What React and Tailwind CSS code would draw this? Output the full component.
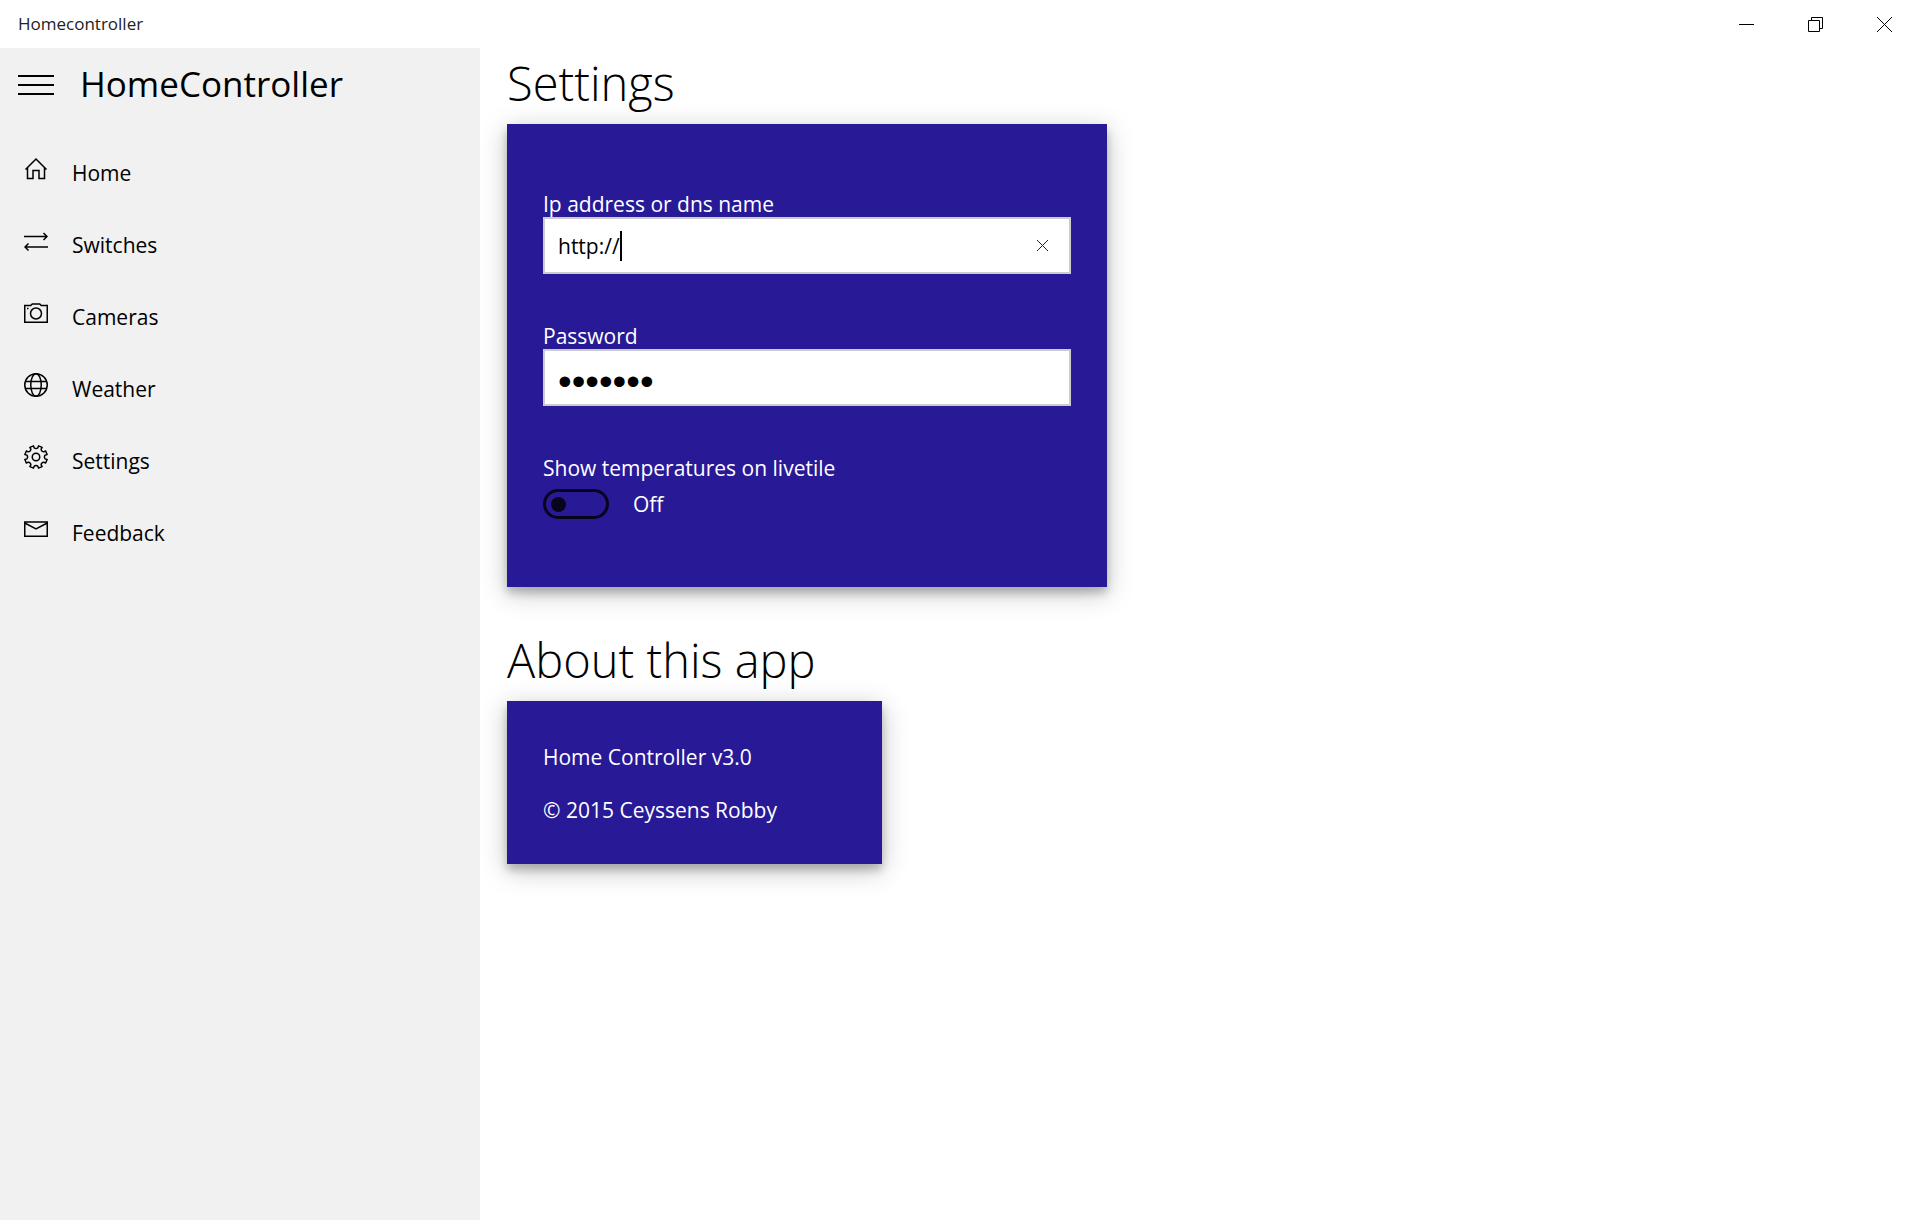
import { useState } from "react";

const stroke = { fill: "none", stroke: "currentColor", strokeWidth: 1.5 };

function gearPath() {
  const pts = [];
  for (let i = 0; i < 8; i++) {
    const base = (i * Math.PI) / 4 + Math.PI / 8;
    [[-0.19, 9.4], [-0.17, 11.4], [0.17, 11.4], [0.19, 9.4]].forEach(([a, r], k) => {
      const p = `${(12 + r * Math.sin(base + a)).toFixed(2)} ${(12 - r * Math.cos(base + a)).toFixed(2)}`;
      if (k === 0 && i > 0) pts.push(`A2.6 2.6 0 0 0 ${p}`);
      else pts.push(`${i === 0 && k === 0 ? "M" : "L"}${p}`);
    });
  }
  const first = pts[0].slice(1);
  return `${pts.join("")}A2.6 2.6 0 0 0 ${first}Z`;
}

const icons = {
  home: (
    <path {...stroke} d="M1.500 12.500 12 2l10.500 10.500M3.500 11v10.500h5.500v-8h6v8h5.500V11" />
  ),
  switches: (
    <path {...stroke} d="M0 7.500h23M19.500 4l3.500 3.500-3.500 3.500M24 18H1M4.500 14.500 1 18l3.500 3.500" />
  ),
  camera: (
    <g {...stroke}>
      <path d="M.75 4.500h6l1.500-1.500h7.500l1.500 1.500h6v16.750H.75z" />
      <circle cx="12" cy="12.500" r="5.500" />
      <path d="M3 7.500h1.500" />
    </g>
  ),
  globe: (
    <g {...stroke}>
      <circle cx="12" cy="12" r="11.250" />
      <ellipse cx="12" cy="12" rx="5.250" ry="11.250" />
      <path d="M1.500 8.500h21M1.500 15.500h21" />
    </g>
  ),
  gear: (
    <g {...stroke} strokeLinejoin="round">
      <path d={gearPath()} />
      <circle cx="12" cy="12" r="3.750" />
    </g>
  ),
  mail: (
    <path {...stroke} d="M.75 5h22.500v14.250H.75zM.75 6l11.250 6 11.250-6" />
  ),
};

const navItems = [
  ["Home", "home"],
  ["Switches", "switches"],
  ["Cameras", "camera"],
  ["Weather", "globe"],
  ["Settings", "gear"],
  ["Feedback", "mail"],
];

function WindowButton({ label, children }) {
  return (
    <button type="button" aria-label={label} className="flex h-12 w-[69px] items-center justify-center">
      <svg width="15" height="15" viewBox="0 0 15 15" fill="none" stroke="black">
        {children}
      </svg>
    </button>
  );
}

function TitleBar() {
  return (
    <header className="flex h-12 items-center justify-between bg-white pr-px pl-[18px]">
      <span className="text-[17px] text-[#222]">Homecontroller</span>
      <div className="flex">
        <WindowButton label="Minimize"><path d="M0 7.500h15" /></WindowButton>
        <WindowButton label="Restore"><path d="M.5 3.500h11v11H.5zM3.500 3.500v-3h11v11h-3" /></WindowButton>
        <WindowButton label="Close"><path d="M0 0l15 15M15 0L0 15" /></WindowButton>
      </div>
    </header>
  );
}

function Sidebar() {
  return (
    <aside className="w-1/4 shrink-0 bg-[#f1f1f1]">
      <div className="flex h-[74px] items-center gap-[26px] pl-[18px]">
        <button type="button" aria-label="Menu" className="flex w-9 flex-col gap-[7px]">
          <span className="h-0.5 bg-black" />
          <span className="h-0.5 bg-black" />
          <span className="h-0.5 bg-black" />
        </button>
        <span className="pb-0.5 text-[35px]">HomeController</span>
      </div>
      <nav className="mt-3.5">
        {navItems.map(([label, icon]) => (
          <a key={label} href={`#${icon}`} className="flex h-[72px] items-center gap-6 pl-6">
            <svg width="24" height="24" viewBox="0 0 24 24" aria-hidden="true" className="mb-1.5">{icons[icon]}</svg>
            <span className="pt-1 text-[21px]">{label}</span>
          </a>
        ))}
      </nav>
    </aside>
  );
}

const cardClass = "bg-[#281997] px-9 text-white shadow-[0_6px_24px_rgba(0,0,0,0.25),0_6px_8px_rgba(0,0,0,0.2)]";
const labelClass = "block text-[21px] leading-[26px]";
const fieldClass = "flex h-[57px] items-center border-2 border-[#ccc] bg-white pl-[13px] text-black";
const headingClass = "h-[76px] text-[47px] leading-[70px] font-light";

function SettingsForm() {
  const [address, setAddress] = useState("http://");
  const [password, setPassword] = useState("1234567");
  const [live, setLive] = useState(false);
  return (
    <form className={`${cardClass} w-[600px] max-w-full pt-[67px] pb-[68px]`}>
      <label htmlFor="address" className={labelClass}>Ip address or dns name</label>
      <div className={fieldClass}>
        <input
          id="address"
          value={address}
          onChange={(e) => setAddress(e.target.value)}
          className="field-sizing-content bg-transparent pt-0.5 text-[21px] outline-none"
        />
        <span className="h-[30px] w-0.5 bg-black" />
        <button type="button" aria-label="Clear" onClick={() => setAddress("")} className="ml-auto flex h-full w-[53px] items-center justify-center">
          <svg width="11" height="11" viewBox="0 0 11 11" stroke="#222"><path d="M0 0l11 11M11 0L0 11" /></svg>
        </button>
      </div>
      <label htmlFor="password" className={`${labelClass} mt-[49px]`}>Password</label>
      <div className={fieldClass}>
        <input
          id="password"
          type="password"
          value={password}
          onChange={(e) => setPassword(e.target.value)}
          className="w-full bg-transparent pt-2 font-['Liberation_Sans',sans-serif] text-[39px] leading-10 outline-none"
        />
      </div>
      <label htmlFor="livetile" className={`${labelClass} mt-[49px]`}>Show temperatures on livetile</label>
      <div className="mt-2 flex h-[30px] items-center gap-6">
        <input
          id="livetile"
          type="checkbox"
          role="switch"
          checked={live}
          onChange={(e) => setLive(e.target.checked)}
          className="h-[30px] w-[66px] appearance-none rounded-full border-3 border-[#07041c] p-[5px] before:block before:size-[15px] before:rounded-full before:bg-[#07041c] checked:before:ml-auto"
        />
        <span className="pt-0.5 text-[21px]">{live ? "On" : "Off"}</span>
      </div>
    </form>
  );
}

export default function App() {
  return (
    <div className="flex min-h-screen flex-col bg-white font-['Open_Sans',sans-serif] text-black">
      <TitleBar />
      <div className="flex grow">
        <Sidebar />
        <main className="min-w-0 grow px-[27px]">
          <h1 className={headingClass}>Settings</h1>
          <SettingsForm />
          <h1 className={`${headingClass} mt-[38px]`}>About this app</h1>
          <section className={`${cardClass} w-[375px] max-w-full space-y-[23px] pt-[41px] pb-[39px] text-[21px] leading-[30px]`}>
            <p>Home Controller v3.0</p>
            <p>© 2015 Ceyssens Robby</p>
          </section>
        </main>
      </div>
    </div>
  );
}
